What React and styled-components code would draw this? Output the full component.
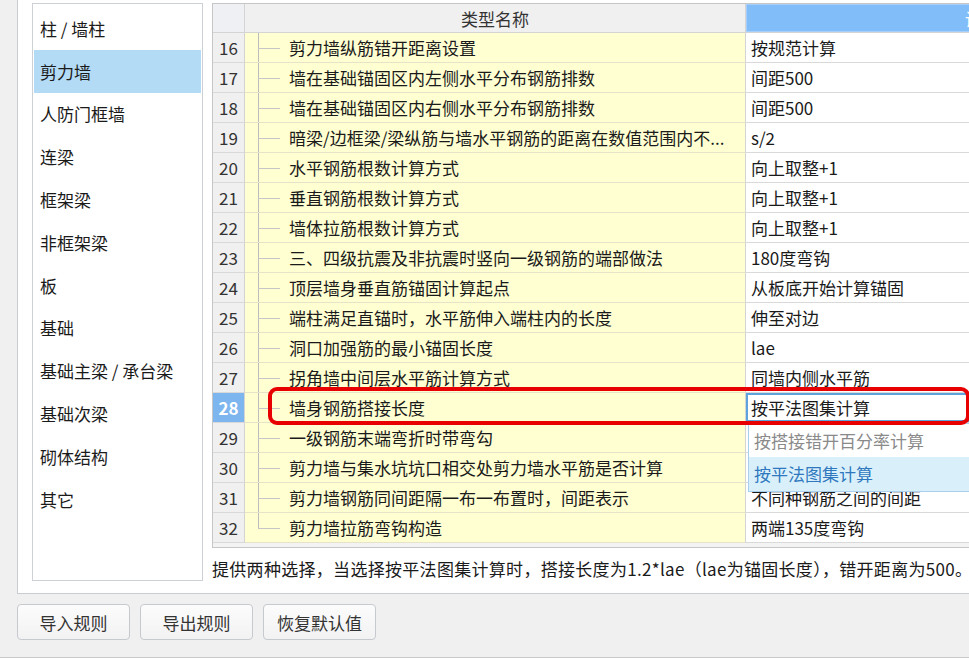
import React from "react";
import styled, { createGlobalStyle } from "styled-components";

const GlobalStyle = createGlobalStyle`
  html, body { margin: 0; padding: 0; background: #f0f0f0; }
  body { font-family: "Noto Sans CJK SC", "Noto Sans", sans-serif; color: #1a1a1a; }
  * { box-sizing: border-box; }
`;

const Root = styled.div`
  width: 969px;
  height: 658px;
  overflow: hidden;
  position: relative;
  background: #f0f0f0;
  border-bottom: 1px solid #c9c9c9;
  display: flex;
  flex-direction: column;
`;

const Panel = styled.div`
  margin-left: 17px;
  width: 1300px;
  height: 594px;
  flex: none;
  background: #fff;
  border-left: 1px solid #c9ccd0;
  border-bottom: 1px solid #c9ccd0;
  padding: 3px 0 0 14px;
  display: flex;
  gap: 9px;
`;

const Sidebar = styled.div`
  width: 171px;
  height: 578px;
  flex: none;
  border: 1px solid #cdd0d4;
  padding: 3px 1px 0 1px;
  display: flex;
  flex-direction: column;
`;

const SideItem = styled.div`
  height: 42.8px;
  flex: none;
  display: flex;
  align-items: center;
  padding-left: 6px;
  font-size: 17px;
  color: #1a1a1a;
  background: ${(p) => (p.$active ? "#b4dbf5" : "transparent")};
`;

const RightCol = styled.div`
  display: flex;
  flex-direction: column;
`;

const TableWrap = styled.div`
  position: relative;
  width: 1030px;
  height: 545px;
  border: 1px solid #c6c6c6;
  background: #f3f3f3;
`;

const Grid = styled.div`
  display: grid;
  grid-template-columns: 32px 501px 490px;
`;

const HeadCell = styled.div`
  height: 29px;
  border-right: 1px solid #d4d4d4;
  border-bottom: 1px solid #d4d4d4;
  background: ${(p) => (p.$blue ? "#80bdf9" : p.$num ? "#eef0f3" : "#f0f0f0")};
  box-shadow: ${(p) => (p.$blue ? "inset 0 0 0 1px #a6d0fb" : "none")};
  display: flex;
  align-items: center;
  justify-content: center;
  font-size: 17px;
  color: ${(p) => (p.$blue ? "#fff" : "#333")};
`;

const NumCell = styled.div`
  height: 30px;
  border-right: 1px solid #d4d4d4;
  border-bottom: 1px solid #d9d9d9;
  background: ${(p) => (p.$active ? "#7db6ef" : "#f0f0f0")};
  color: ${(p) => (p.$active ? "#fff" : "#333")};
  font-weight: ${(p) => (p.$active ? 700 : 400)};
  font-size: 17px;
  display: flex;
  align-items: center;
  justify-content: center;
`;

const NameCell = styled.div`
  position: relative;
  height: 30px;
  border-right: 1px solid #d4d4d4;
  border-bottom: 1px solid #e6e3c8;
  background: #ffffd2;
  font-size: 17px;
  display: flex;
  align-items: center;
  padding-left: 44px;
  padding-right: 12px;
  white-space: nowrap;
  overflow: hidden;
  &::before {
    content: "";
    position: absolute;
    left: 13px;
    top: -1px;
    height: ${(p) => (p.$last ? "16px" : "31px")};
    border-left: 1px solid #bdbdbd;
  }
  &::after {
    content: "";
    position: absolute;
    left: 13px;
    top: 15px;
    width: 22px;
    border-top: 1px solid #c6c6c6;
  }
`;

const ValueCell = styled.div`
  position: relative;
  height: 30px;
  border-bottom: 1px solid #d9d9d9;
  background: #fff;
  font-size: 17px;
  display: flex;
  align-items: center;
  padding-left: 5px;
  white-space: nowrap;
  box-shadow: ${(p) => (p.$editing ? "inset 0 0 0 2px #5fa3dd" : "none")};
  z-index: ${(p) => (p.$editing ? 3 : "auto")};
`;

const Dropdown = styled.div`
  position: absolute;
  left: 2px;
  top: 30px;
  width: 480px;
  height: 69px;
  background: #fff;
  border: 1px solid #a8d0ee;
  z-index: 4;
  display: flex;
  flex-direction: column;
`;

const Option = styled.div`
  height: ${(p) => (p.$selected ? "35px" : "33px")};
  display: flex;
  align-items: center;
  padding-left: 5px;
  font-size: 17px;
  color: ${(p) => (p.$selected ? "#2f78be" : "#8a8a8a")};
  background: ${(p) => (p.$selected ? "#d9f0fb" : "#fff")};
`;

const Annotation = styled.div`
  position: absolute;
  left: 55px;
  top: 383px;
  width: 702px;
  height: 38px;
  border: 4px solid #e80000;
  border-radius: 9px;
  z-index: 5;
  pointer-events: none;
`;

const Description = styled.div`
  padding-top: 8px;
  font-size: 17px;
  letter-spacing: 0.3px;
  white-space: nowrap;
  color: #1a1a1a;
`;

const ButtonRow = styled.div`
  display: flex;
  gap: 10px;
  padding: 10px 0 0 17px;
`;

const Button = styled.button`
  width: 113px;
  height: 36px;
  border: 1px solid #c6c9ce;
  border-radius: 4px;
  background: linear-gradient(#fcfcfc, #f2f2f2);
  font-family: "Noto Sans CJK SC", sans-serif;
  font-size: 17px;
  color: #333;
  padding: 0;
`;

const sideItems = [
  "柱 / 墙柱",
  "剪力墙",
  "人防门框墙",
  "连梁",
  "框架梁",
  "非框架梁",
  "板",
  "基础",
  "基础主梁 / 承台梁",
  "基础次梁",
  "砌体结构",
  "其它",
];

const rows = [
  [16, "剪力墙纵筋错开距离设置", "按规范计算"],
  [17, "墙在基础锚固区内左侧水平分布钢筋排数", "间距500"],
  [18, "墙在基础锚固区内右侧水平分布钢筋排数", "间距500"],
  [19, "暗梁/边框梁/梁纵筋与墙水平钢筋的距离在数值范围内不...", "s/2"],
  [20, "水平钢筋根数计算方式", "向上取整+1"],
  [21, "垂直钢筋根数计算方式", "向上取整+1"],
  [22, "墙体拉筋根数计算方式", "向上取整+1"],
  [23, "三、四级抗震及非抗震时竖向一级钢筋的端部做法", "180度弯钩"],
  [24, "顶层墙身垂直筋锚固计算起点", "从板底开始计算锚固"],
  [25, "端柱满足直锚时，水平筋伸入端柱内的长度", "伸至对边"],
  [26, "洞口加强筋的最小锚固长度", "lae"],
  [27, "拐角墙中间层水平筋计算方式", "同墙内侧水平筋"],
  [28, "墙身钢筋搭接长度", "按平法图集计算"],
  [29, "一级钢筋末端弯折时带弯勾", ""],
  [30, "剪力墙与集水坑坑口相交处剪力墙水平筋是否计算", ""],
  [31, "剪力墙钢筋同间距隔一布一布置时，间距表示", "不同种钢筋之间的间距"],
  [32, "剪力墙拉筋弯钩构造", "两端135度弯钩"],
];

export default function App() {
  return (
    <Root>
      <GlobalStyle />
      <Panel>
        <Sidebar>
          {sideItems.map((s) => (
            <SideItem key={s} $active={s === "剪力墙"}>
              {s}
            </SideItem>
          ))}
        </Sidebar>
        <RightCol>
          <TableWrap>
            <Grid>
              <HeadCell $num />
              <HeadCell>类型名称</HeadCell>
              <HeadCell $blue>设置值</HeadCell>
              {rows.map(([n, name, val], i) => (
                <React.Fragment key={n}>
                  <NumCell $active={n === 28}>{n}</NumCell>
                  <NameCell $last={i === rows.length - 1}>{name}</NameCell>
                  <ValueCell $editing={n === 28}>
                    {val}
                    {n === 28 && (
                      <Dropdown>
                        <Option>按搭接错开百分率计算</Option>
                        <Option $selected>按平法图集计算</Option>
                      </Dropdown>
                    )}
                  </ValueCell>
                </React.Fragment>
              ))}
            </Grid>
            <Annotation />
          </TableWrap>
          <Description>
            提供两种选择，当选择按平法图集计算时，搭接长度为1.2*lae（lae为锚固长度），错开距离为500。
          </Description>
        </RightCol>
      </Panel>
      <ButtonRow>
        <Button>导入规则</Button>
        <Button>导出规则</Button>
        <Button>恢复默认值</Button>
      </ButtonRow>
    </Root>
  );
}
